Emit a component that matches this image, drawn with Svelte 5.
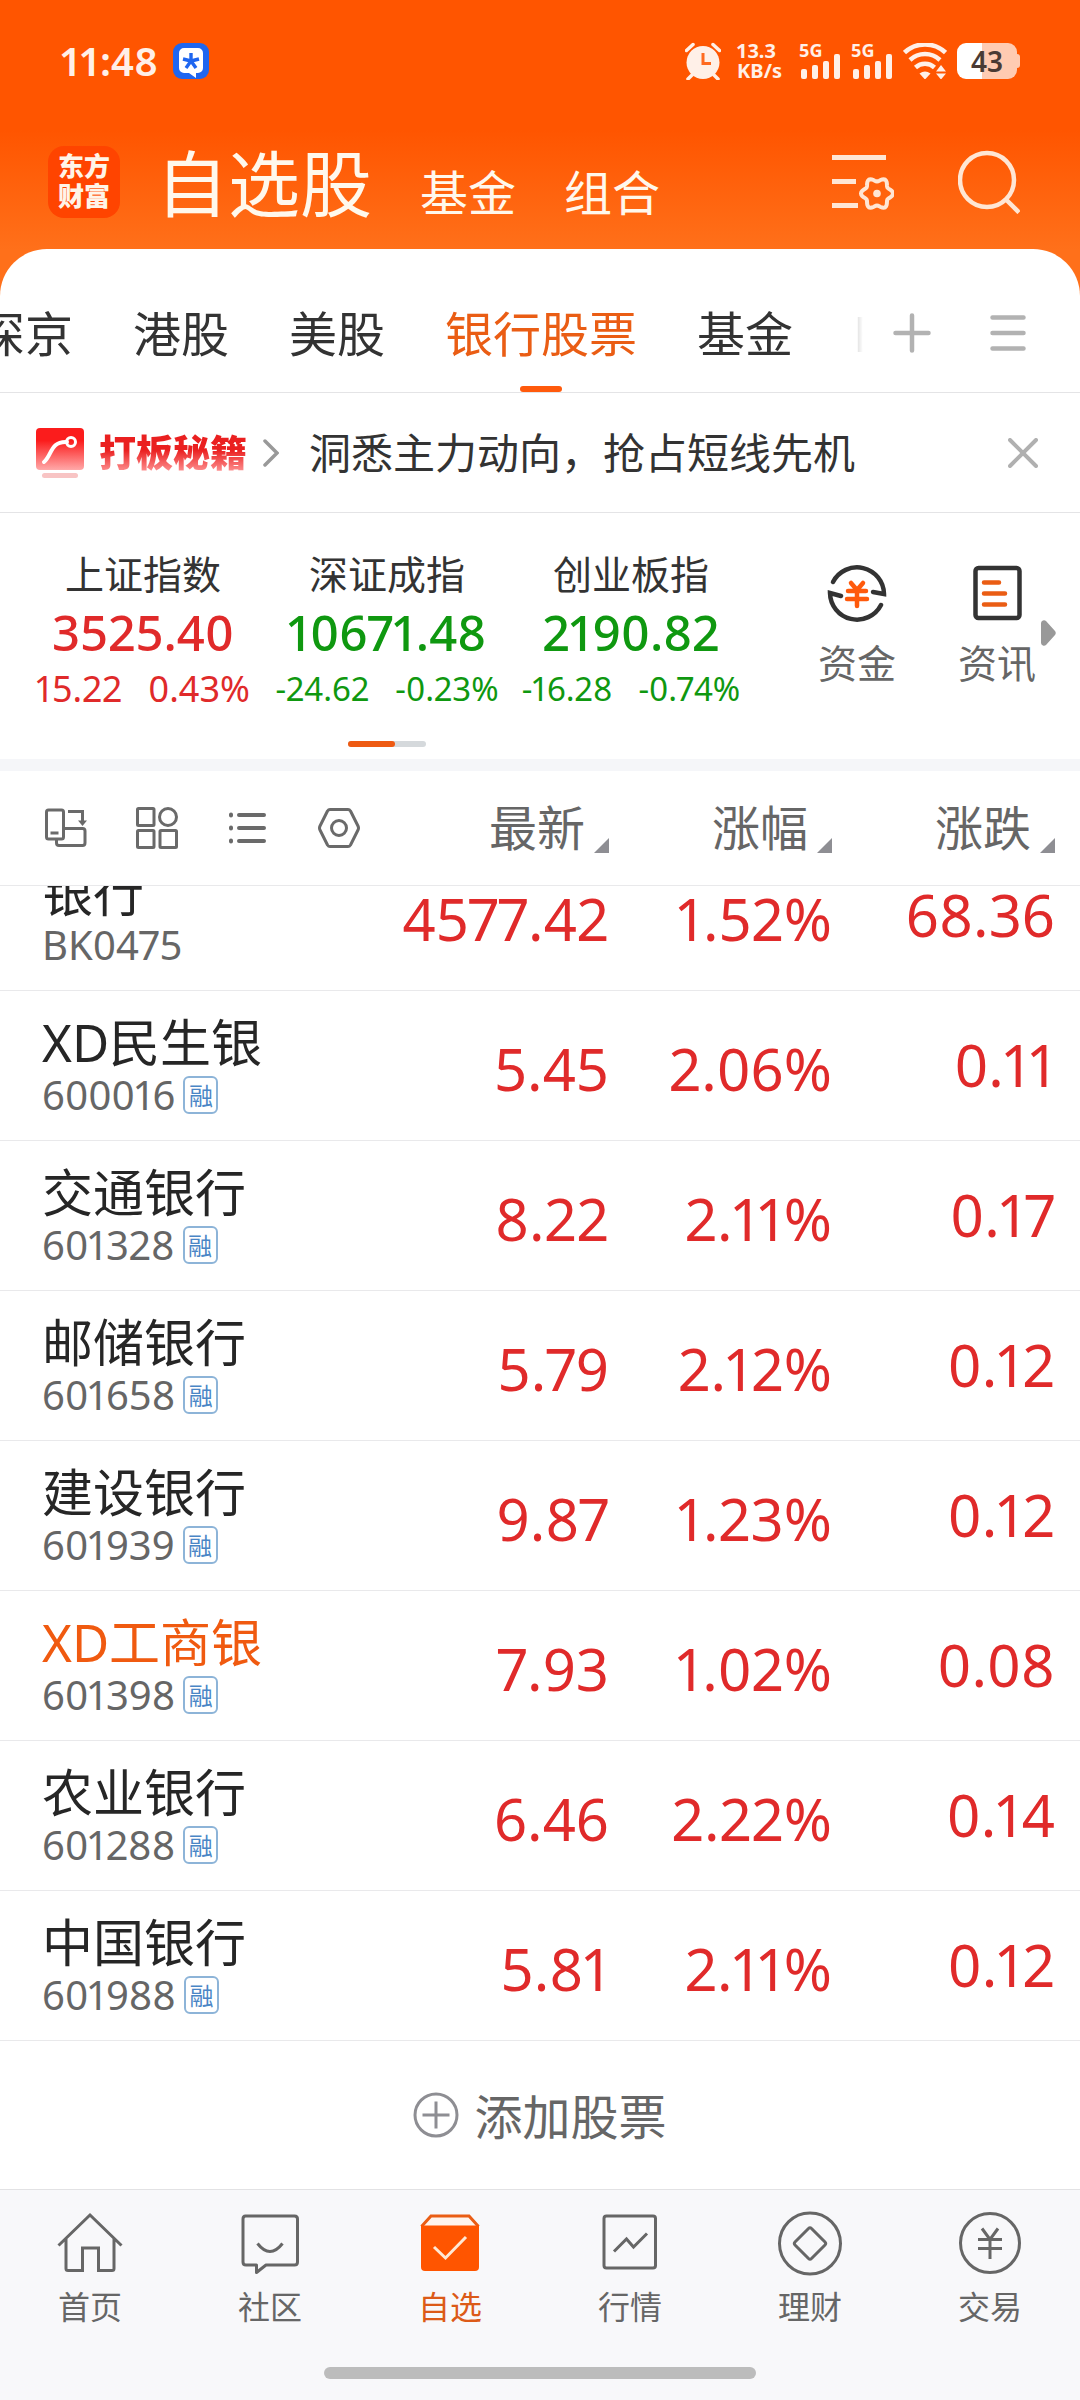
<script>
  const groups = ['沪深京', '港股', '美股', '银行股票', '基金', 'ETF'];
  const activeGroup = '银行股票';

  const indices = [
    { name: '上证指数', value: '3525.40', diff: '15.22', pct: '0.43%', up: true },
    { name: '深证成指', value: '10671.48', diff: '-24.62', pct: '-0.23%', up: false },
    { name: '创业板指', value: '2190.82', diff: '-16.28', pct: '-0.74%', up: false }
  ];

  const columns = ['最新', '涨幅', '涨跌'];

  const stocks = [
    { name: '银行', code: 'BK0475', last: '4577.42', pct: '1.52%', diff: '68.36', partial: true },
    { name: 'XD民生银', code: '600016', last: '5.45', pct: '2.06%', diff: '0.11', margin: true },
    { name: '交通银行', code: '601328', last: '8.22', pct: '2.11%', diff: '0.17', margin: true },
    { name: '邮储银行', code: '601658', last: '5.79', pct: '2.12%', diff: '0.12', margin: true },
    { name: '建设银行', code: '601939', last: '9.87', pct: '1.23%', diff: '0.12', margin: true },
    { name: 'XD工商银', code: '601398', last: '7.93', pct: '1.02%', diff: '0.08', margin: true, held: true },
    { name: '农业银行', code: '601288', last: '6.46', pct: '2.22%', diff: '0.14', margin: true },
    { name: '中国银行', code: '601988', last: '5.81', pct: '2.11%', diff: '0.12', margin: true }
  ];

  // Outline of a six-lobed gear around (cx, cy).
  function gear(cx, cy, radius, depth) {
    const points = [];
    for (let i = 0; i < 72; i++) {
      const a = (i / 72) * Math.PI * 2;
      const r = radius + depth * Math.cos(6 * a);
      points.push(`${(cx + r * Math.cos(a)).toFixed(2)} ${(cy + r * Math.sin(a)).toFixed(2)}`);
    }
    return `M${points.join('L')}z`;
  }
</script>

{#snippet signal()}
  <svg class="signal" width="42" height="36" viewBox="0 0 42 36" fill="#fff0e8">
    <text x="0" y="14" font-size="18" font-weight="700">5G</text>
    <rect x="2" y="26" width="6" height="10" rx="2" />
    <rect x="13" y="22" width="6" height="14" rx="2" />
    <rect x="24" y="18" width="6" height="18" rx="2" />
    <rect x="35" y="11" width="6" height="25" rx="2" />
  </svg>
{/snippet}

<div class="app">
  <header class="top">
    <div class="status">
      <span class="time">11:48</span>
      <svg width="36" height="36" viewBox="0 0 36 36">
        <rect width="36" height="36" rx="9" fill="#1f66f0" />
        <path d="M11 5h14a5 5 0 0 1 5 5v15a5 5 0 0 1-5 5h-2v5l-7-5h-5a5 5 0 0 1-5-5V10a5 5 0 0 1 5-5z" fill="#fff" />
        <path d="M18 18V10M18 18l8-2M18 18l5 7M18 18l-5 7M18 18l-8-2" stroke="#1f66f0" stroke-width="3.4" />
      </svg>
      <div class="indicators">
        <svg class="alarm" width="36" height="38" viewBox="0 0 36 38" fill="none" stroke="#fff0e8" stroke-width="3.5">
          <circle cx="18" cy="20.500" r="16.500" fill="#fff0e8" stroke="none" />
          <path d="M1.500 8.500 8 2.500M34.500 8.500 28 2.500M7 33l-4 4M29 33l4 4" stroke-linecap="round" />
          <path d="M18 11v10.500h8" stroke="#ff6a20" stroke-width="3" />
        </svg>
        <div class="speed"><span>13.3</span><span>KB/s</span></div>
        {@render signal()}
        {@render signal()}
        <svg class="wifi" width="44" height="36" viewBox="0 0 44 36" fill="none" stroke="#fff0e8" stroke-width="4.500">
          <path d="M1.500 9.500a30 30 0 0 1 41 0M7 17a22 22 0 0 1 30 0M12.500 24.500a14 14 0 0 1 19 0" />
          <path d="M16.500 30.500q5.500-4 11 0L22 36.500z" fill="#fff0e8" stroke="none" />
          <path d="M33 28.500l5-6.500 5 6.500zM33 30.500l5 6 5-6z" fill="#fff0e8" stroke="none" />
        </svg>
        <div class="battery">43</div>
      </div>
    </div>

    <div class="titlebar">
      <div class="logo"><span>东方</span><span>财富</span></div>
      <nav class="sections">
        <button class="current">自选股</button>
        <button>基金</button>
        <button>组合</button>
      </nav>
      <button class="icon" aria-label="列表设置">
        <svg width="62" height="58" viewBox="0 0 62 58" fill="none" stroke="#ffe6d4" stroke-width="5">
          <path d="M0 4.500h54M0 28.500h24M0 52.500h26" />
          <path d={gear(45, 40.5, 14, 2)} stroke-width="4" />
          <circle cx="45" cy="40.500" r="3.800" fill="#ffe6d4" stroke="none" />
        </svg>
      </button>
      <button class="icon" aria-label="搜索">
        <svg width="62" height="64" viewBox="0 0 62 64" fill="none" stroke="#ffe6d4" stroke-width="4.500">
          <circle cx="29" cy="30" r="27" />
          <path d="M47.500 49 61 62.500" />
        </svg>
      </button>
    </div>

    <div class="sheet">
      <nav class="groups">
        {#each groups as g}
          <button class:active={g === activeGroup}>{g}</button>
        {/each}
      </nav>
      <button class="icon" aria-label="添加分组">
        <svg width="38" height="40" viewBox="0 0 38 40" stroke="#b2b2b2" stroke-width="4.500" stroke-linecap="round">
          <path d="M19 2.500v35M2.500 20h33" />
        </svg>
      </button>
      <button class="icon" aria-label="管理分组">
        <svg width="36" height="40" viewBox="0 0 36 40" stroke="#b2b2b2" stroke-width="4.500" stroke-linecap="round">
          <path d="M2.500 4.500h31M2.500 20h31M2.500 35.500h31" />
        </svg>
      </button>
    </div>
  </header>

  <main>
    <div class="banner">
      <svg width="48" height="50" viewBox="0 0 48 50" fill="none">
        <defs>
          <linearGradient id="tip" x1="0" y1="0" x2="0" y2="1">
            <stop offset="0.300" stop-color="#fb1c1c" />
            <stop offset="1" stop-color="#ffa9a9" />
          </linearGradient>
        </defs>
        <rect width="48" height="42" rx="4" fill="url(#tip)" />
        <path d="M8 34c8-6 6-21 23-20" stroke="#fff" stroke-width="4" stroke-linecap="round" />
        <circle cx="35" cy="14" r="4.500" stroke="#fff" stroke-width="3" />
        <rect x="6" y="45" width="36" height="5" rx="2.500" fill="#f8c4c4" />
      </svg>
      <strong>打板秘籍</strong>
      <svg class="chev" width="16" height="28" viewBox="0 0 16 28" fill="none" stroke="#999" stroke-width="3.500" stroke-linecap="round">
        <path d="M2 2l12 12L2 26" />
      </svg>
      <a href="#tips">洞悉主力动向，抢占短线先机</a>
      <button class="icon" aria-label="关闭">
        <svg width="30" height="30" viewBox="0 0 30 30" stroke="#b0b0b0" stroke-width="4" stroke-linecap="round">
          <path d="M2 2l26 26M28 2 2 28" />
        </svg>
      </button>
    </div>

    <section class="market">
      <div class="indices">
        {#each indices as i}
          <div class="index" class:up={i.up}>
            <span class="iname">{i.name}</span>
            <span class="ivalue">{i.value}</span>
            <span class="idiff"><span>{i.diff}</span><span>{i.pct}</span></span>
          </div>
        {/each}
        <div class="pager"><i></i></div>
      </div>
      <div class="shortcuts">
        <button>
          <svg width="60" height="60" viewBox="0 0 60 60" fill="none" stroke="#333" stroke-width="4.500">
            <path d="M6 19A27 27 0 0 1 57 31L46 29" stroke-linecap="round" />
            <path d="M54 42A27 27 0 0 1 3 30l11 3" stroke-linecap="round" />
            <path d="M24 20l6 7 6-7M21 28h18M20 36h20M30 27v16" stroke="#ff5a0c" stroke-linecap="round" />
          </svg>
          资金
        </button>
        <button>
          <svg width="60" height="60" viewBox="0 0 60 60" fill="none" stroke="#333" stroke-width="4.500" stroke-linecap="round">
            <rect x="8.500" y="5" width="44" height="50" rx="3" />
            <path d="M17 19.500h15M17 30.500h21M17 41.500h21" stroke="#ea5d14" />
          </svg>
          资讯
        </button>
      </div>
      <svg class="more" width="15" height="26" viewBox="0 0 15 26" fill="#999">
        <path d="M0 3a3 3 0 0 1 5-2l9 10q1.500 2 0 4L5 25a3 3 0 0 1-5-2z" />
      </svg>
    </section>

    <table>
      <thead>
        <tr>
          <th class="tools">
            <div class="toolbar">
              <button class="icon" aria-label="横屏">
                <svg width="42" height="42" viewBox="0 0 42 42" fill="none" stroke="#6a6a6a" stroke-width="3">
                  <rect x="1.500" y="3" width="17" height="29" rx="2" />
                  <path d="M5.500 26h8M19 21.500h18.500a2.500 2.500 0 0 1 2.500 2.500v12a2.500 2.500 0 0 1-2.500 2.500H14a2.500 2.500 0 0 1-2.500-2.500v-4M23 4.500h14.500V14" />
                  <path d="M33 13.500h9L37.500 19z" fill="#6a6a6a" stroke="none" />
                </svg>
              </button>
              <button class="icon" aria-label="宫格">
                <svg width="42" height="42" viewBox="0 0 42 42" fill="none" stroke="#6a6a6a" stroke-width="3">
                  <rect x="1.500" y="1.500" width="16.500" height="17" rx="1" />
                  <circle cx="32" cy="10" r="8.500" />
                  <rect x="1.500" y="23.500" width="16.500" height="17" rx="1" />
                  <rect x="24" y="23.500" width="16.500" height="17" rx="1" />
                </svg>
              </button>
              <button class="icon" aria-label="列表">
                <svg width="42" height="42" viewBox="0 0 42 42" stroke="#6a6a6a" stroke-width="4" stroke-linecap="round">
                  <path d="M12 8h25M12 21h25M12 34h25M4 7.500v1M4 20.500v1M4 33.500v1" />
                </svg>
              </button>
              <button class="icon" aria-label="设置">
                <svg width="42" height="42" viewBox="0 0 42 42" fill="none" stroke="#6a6a6a" stroke-width="3" stroke-linejoin="round">
                  <path d="M12 2.500h18q1.500 0 2.500 1.500l7.500 15q1 2 0 4L32.500 38q-1 1.500-2.500 1.500H12q-1.500 0-2.500-1.500L2 23q-1-2 0-4L9.500 4q1-1.500 2.500-1.500z" />
                  <circle cx="21" cy="21" r="7.500" />
                </svg>
              </button>
            </div>
          </th>
          {#each columns as c}
            <th><button class="sort"><span>{c}</span><svg width="15" height="15" viewBox="0 0 15 15"><path d="M15 0v15H0z" fill="#8e8e93" /></svg></button></th>
          {/each}
        </tr>
      </thead>
      <tbody>
        {#each stocks as s}
          <tr class:partial={s.partial} class:held={s.held}>
            <td>
              <div class="clip"><div class="who">
                <span class="name">{s.name}</span>
                <span class="code">{s.code}{#if s.margin}<span class="badge">融</span>{/if}</span>
              </div></div>
            </td>
            <td><div class="clip"><div class="num">{s.last}</div></div></td>
            <td><div class="clip"><div class="num">{s.pct}</div></div></td>
            <td><div class="clip"><div class="num change">{s.diff}</div></div></td>
          </tr>
        {/each}
      </tbody>
    </table>

    <button class="add">
      <svg width="46" height="46" viewBox="0 0 46 46" fill="none" stroke="#8e8e93" stroke-width="3">
        <circle cx="23" cy="23" r="21" />
        <path d="M23 9.500v27M9.500 23h27" />
      </svg>
      <span>添加股票</span>
    </button>
  </main>

  <footer>
    <nav class="tabbar">
      <a href="#home">
        <svg width="66" height="66" viewBox="0 0 66 66" fill="none" stroke="#666" stroke-width="3">
          <path d="M1.500 35.500 33 5l31.500 30.500M9 29v29.500q0 2 2 2h14.500V38h16v22.500H55q2 0 2-2V29" />
        </svg>
        首页
      </a>
      <a href="#community">
        <svg width="66" height="66" viewBox="0 0 66 66" fill="none" stroke="#666" stroke-width="3">
          <path d="M8.500 6h49q3 0 3 3v43q0 3-3 3H29l-9.500 7.500V55H9q-3 0-3-3V9q0-3 2.500-3z" stroke-linejoin="round" />
          <path d="M20.500 33.500q12.500 16 25 0" />
        </svg>
        社区
      </a>
      <a href="#watchlist" class="active">
        <svg width="66" height="66" viewBox="0 0 66 66" fill="none">
          <path d="M4.500 16.500 14 6h38l9.500 10.500" stroke="#ea5d14" stroke-width="3" fill="#fff4ec" />
          <path d="M4 15.500h58V57q0 4-4 4H8q-4 0-4-4z" fill="#ff5500" />
          <path d="M17 37l11.500 11L49 27" stroke="#ffe8d4" stroke-width="3" />
        </svg>
        自选
      </a>
      <a href="#quotes">
        <svg width="66" height="66" viewBox="0 0 66 66" fill="none" stroke="#666" stroke-width="3">
          <rect x="7" y="6" width="51.500" height="52" rx="2.500" />
          <path d="M17 41.500 29.500 29l7 8L50 23.500" />
        </svg>
        行情
      </a>
      <a href="#wealth">
        <svg width="66" height="66" viewBox="0 0 66 66" fill="none" stroke="#666" stroke-width="3">
          <circle cx="33" cy="33.500" r="30.500" />
          <path d="M31.500 18.500q1.500-1.500 3 0l13.500 13.500q1.500 1.500 0 3L34.500 48.500q-1.500 1.500-3 0L18 35q-1.500-1.500 0-3z" />
        </svg>
        理财
      </a>
      <a href="#trade">
        <svg width="66" height="66" viewBox="0 0 66 66" fill="none" stroke="#666" stroke-width="3">
          <circle cx="33" cy="33" r="29.500" />
          <path d="M25 18.500l8 11 8-11M21 29.500h24M21 38.500h24M33 29v20" />
        </svg>
        交易
      </a>
    </nav>
    <div class="handle"></div>
  </footer>
</div>

<style>
  :global(body) {
    margin: 0;
    background: #fff;
  }
  .app {
    font-family: 'Noto Sans CJK SC', sans-serif;
    font-variant-numeric: proportional-nums;
    color: #333;
    overflow: hidden;
  }
  .app * {
    box-sizing: border-box;
  }
  button {
    font: inherit;
    color: inherit;
    background: none;
    border: 0;
    padding: 0;
  }
  a {
    color: inherit;
    text-decoration: none;
  }
  svg {
    display: block;
    flex: none;
  }

  .top {
    background: linear-gradient(#ff5500 0, #ff5500 130px, #ff701a 250px, #ff701a 100%);
  }
  .status {
    display: flex;
    align-items: center;
    height: 122px;
    padding: 0 63px 0 61px;
    gap: 15px;
    color: #fff0e8;
    font-family: 'Noto Sans', sans-serif;
  }
  .time {
    font-size: 40px;
    line-height: 48px;
    font-weight: 600;
  }
  .indicators {
    display: flex;
    align-items: center;
    margin-left: auto;
    gap: 10px;
  }
  .signal {
    overflow: visible;
  }
  .alarm {
    margin-right: 6px;
  }
  .speed {
    display: flex;
    flex-direction: column;
    margin-right: 7px;
    font-size: 20px;
    line-height: 20px;
    font-weight: 700;
  }
  .battery {
    width: 60px;
    height: 36px;
    border-radius: 9px;
    background: linear-gradient(90deg, #fff 25px, #ffcbb2 25px);
    color: #4a3a34;
    font-size: 28px;
    line-height: 36px;
    font-weight: 600;
    text-align: center;
    position: relative;
  }
  .battery::after {
    content: '';
    position: absolute;
    right: -3px;
    top: 11px;
    width: 3px;
    height: 14px;
    border-radius: 0 3px 3px 0;
    background: #ffcbb2;
  }

  .titlebar {
    display: flex;
    align-items: center;
    height: 127px;
    padding: 0 60px 8px 48px;
    gap: 64px;
  }
  .logo {
    display: flex;
    flex-direction: column;
    align-items: center;
    justify-content: center;
    width: 72px;
    height: 72px;
    padding-bottom: 3px;
    border-radius: 16px;
    background: #ff4400;
    color: #fff4e8;
    font-size: 26px;
    line-height: 30px;
    font-weight: 900;
  }
  .sections {
    display: flex;
    align-items: baseline;
    flex: 1;
    gap: 48px;
    margin-left: -28px;
    padding-top: 6px;
    color: #fff8ec;
    font-size: 48px;
    line-height: 72px;
  }
  .sections .current {
    font-size: 72px;
  }

  .sheet {
    display: flex;
    align-items: center;
    height: 144px;
    padding: 27px 54px 0 0;
    gap: 59px;
    border-bottom: 1px solid #e4e4e6;
    border-radius: 47px 47px 0 0;
    background: #fff;
  }
  .sheet .icon {
    padding-bottom: 3px;
  }
  .groups {
    display: flex;
    flex: 1;
    min-width: 0;
    height: 116px;
    gap: 60px;
    margin-left: -71px;
    margin-right: -29px;
    overflow: hidden;
    font-size: 48px;
    mask-image: linear-gradient(90deg, #000 calc(100% - 40px), transparent);
  }
  .groups button {
    flex: none;
    position: relative;
    padding-bottom: 6px;
  }
  .groups .active {
    color: #ea5d14;
  }
  .groups .active::after {
    content: '';
    position: absolute;
    left: 50%;
    bottom: 0;
    width: 42px;
    height: 6px;
    margin-left: -21px;
    border-radius: 3px;
    background: #ff5a0c;
  }

  .banner {
    display: flex;
    align-items: center;
    height: 120px;
    padding: 0 42px 0 36px;
    border-bottom: 1px solid #e4e4e6;
    font-size: 42px;
  }
  .banner strong {
    margin: 0 16px 0 15px;
    padding-bottom: 4px;
    font-size: 37px;
    font-weight: 900;
    background: linear-gradient(#ea2020 45%, #ff9a9a 85%);
    background-clip: text;
    color: transparent;
  }
  .banner a {
    flex: 1;
    margin-left: 30px;
    padding-bottom: 4px;
  }

  .market {
    display: flex;
    height: 258px;
    padding-left: 21px;
    padding-right: 24px;
    border-bottom: 12px solid #f5f6f9;
  }
  .indices {
    display: grid;
    grid-template-columns: repeat(3, 244px);
    grid-template-rows: 228px 6px;
    justify-items: center;
  }
  .index {
    display: flex;
    flex-direction: column;
    align-items: center;
    padding-top: 34px;
    color: #0f9810;
    font-family: 'Noto Sans', sans-serif;
  }
  .index.up {
    color: #e02a2a;
  }
  .iname {
    color: #333;
    font: 39px/50px 'Noto Sans CJK SC', sans-serif;
  }
  .ivalue {
    font-size: 49px;
    line-height: 70px;
    font-weight: 500;
  }
  .idiff {
    display: flex;
    gap: 26px;
    font-size: 33px;
    line-height: 43px;
  }
  .up .idiff {
    font-size: 36px;
  }
  .pager {
    grid-column: 1 / -1;
    width: 78px;
    height: 6px;
    border-radius: 3px;
    background: #d5d9dc;
  }
  .pager i {
    display: block;
    width: 47px;
    height: 6px;
    border-radius: 3px;
    background: #ee5a12;
  }
  .shortcuts {
    display: flex;
    flex: 1;
    justify-content: flex-end;
    gap: 62px;
    margin-top: 50px;
  }
  .shortcuts button {
    display: flex;
    flex-direction: column;
    align-items: center;
    gap: 13px;
    color: #666;
    font-size: 39px;
    line-height: 50px;
  }
  .shortcuts svg {
    margin: 0 9px;
  }
  .more {
    margin: 107px 0 0 5px;
  }

  table {
    width: 100%;
    table-layout: fixed;
    border-collapse: collapse;
  }
  th,
  td {
    width: 223px;
    padding: 0;
    border-bottom: 1px solid #e9e9eb;
    font-weight: 400;
  }
  th:first-child {
    width: auto;
  }
  th:last-child {
    width: 248px;
    padding-right: 25px;
  }
  td:last-child {
    padding-right: 25px;
  }
  th {
    height: 114px;
    color: #666;
    font-size: 48px;
  }
  .toolbar {
    display: flex;
    gap: 49px;
    padding-left: 45px;
  }
  .sort {
    display: flex;
    align-items: flex-end;
    gap: 9px;
    margin-left: auto;
    margin-bottom: 6px;
    line-height: 56px;
  }
  .clip {
    display: flex;
    align-items: flex-end;
    height: 149px;
    overflow: hidden;
  }
  .partial .clip {
    height: 104px;
  }
  .who {
    display: flex;
    flex: none;
    flex-direction: column;
    height: 149px;
    padding: 22px 0 0 42px;
  }
  .name {
    color: #262626;
    font-family: 'Noto Sans', 'Noto Sans CJK SC', sans-serif;
    font-size: 51px;
    line-height: 58px;
  }
  .held .name {
    color: #f05a10;
  }
  .code {
    display: flex;
    align-items: center;
    gap: 8px;
    height: 48px;
    color: #666;
    font-family: 'Noto Sans', sans-serif;
    font-size: 40px;
    line-height: 48px;
  }
  .badge {
    width: 35px;
    height: 38px;
    border: 2px solid #8db4d8;
    border-radius: 6px;
    color: #4a86c6;
    font: 24px/33px 'Noto Sans CJK SC', sans-serif;
    text-align: center;
  }
  .num {
    flex: 1;
    height: 149px;
    padding-top: 4px;
    color: #e02a2a;
    font-family: 'Noto Sans', sans-serif;
    font-size: 58px;
    line-height: 147px;
    text-align: right;
  }
  .num.change {
    padding-top: 0;
  }

  .add {
    display: flex;
    align-items: center;
    justify-content: center;
    gap: 15px;
    width: 100%;
    height: 148px;
    color: #666;
    font-size: 48px;
  }
  .add span {
    padding-bottom: 2px;
  }

  footer {
    height: 211px;
    border-top: 1px solid #e2e2e4;
    background: #f8f8fa;
  }
  .tabbar {
    display: grid;
    grid-template-columns: repeat(6, 1fr);
    padding-top: 20px;
    height: 177px;
    color: #666;
    font-size: 32px;
    line-height: 40px;
  }
  .tabbar a {
    display: flex;
    flex-direction: column;
    align-items: center;
    gap: 9px;
  }
  .tabbar .active {
    color: #dc5a18;
  }
  .handle {
    width: 40%;
    height: 12px;
    margin: 0 auto;
    border-radius: 6px;
    background: #bcbcbc;
  }
</style>
